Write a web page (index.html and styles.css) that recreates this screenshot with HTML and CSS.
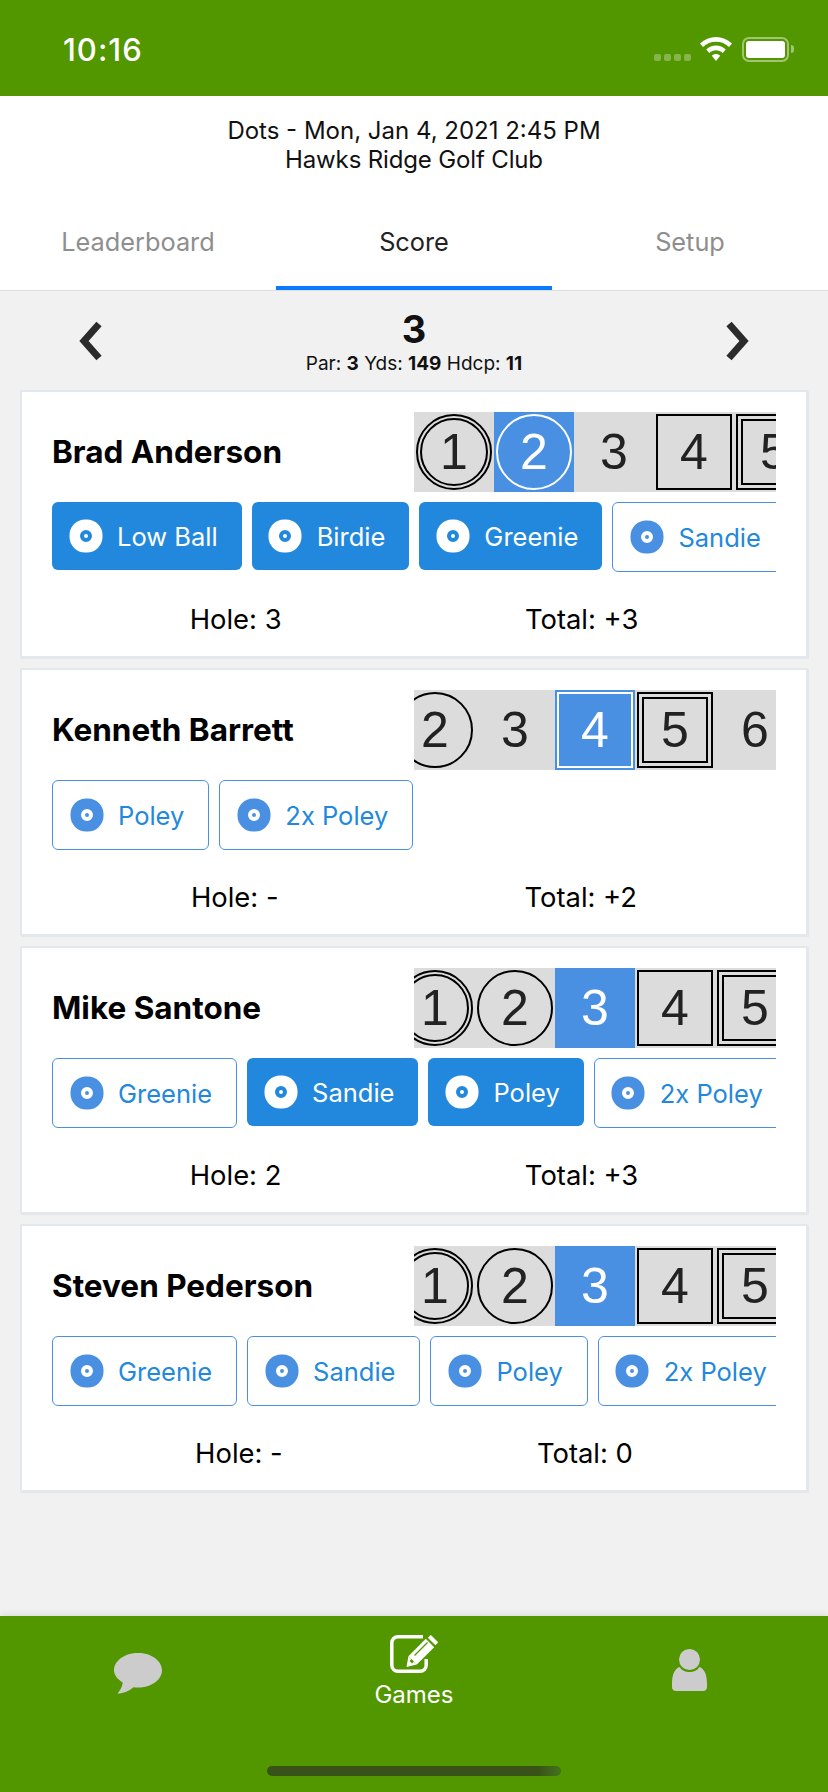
FILE: index.html
```html
<!DOCTYPE html>
<html lang="en">
<head>
    <meta charset="UTF-8">
    <meta name="viewport" content="width=device-width, initial-scale=1.0">
    <title>Score</title>
    <link rel="stylesheet" href="styles.css">
</head>
<body>

<div class="app">
    <!-- Status bar -->
    <div class="status-bar">
        <span class="time">10:16</span>
        <div class="status-icons">
            <div class="signal"><i></i><i></i><i></i><i></i></div>
            <svg class="wifi" width="32" height="24" viewBox="0 0 32 24">
                <path d="M16 0C10 0 4.5 2.3 0 6.5L3 10C6.5 6.7 11 4.8 16 4.8S25.5 6.7 29 10L32 6.5C27.5 2.3 22 0 16 0Z" fill="#fff"/>
                <path d="M16 8.5C12.3 8.5 9 10 6.3 12.5L9.3 16C11.2 14.3 13.5 13.3 16 13.3S20.8 14.3 22.7 16L25.7 12.5C23 10 19.7 8.5 16 8.5Z" fill="#fff"/>
                <path d="M16 17C14.4 17 13 17.6 11.8 18.7L16 24L20.2 18.7C19 17.6 17.6 17 16 17Z" fill="#fff"/>
            </svg>
            <div class="battery"><div class="battery-fill"></div></div>
            <div class="battery-tip"></div>
        </div>
    </div>

    <div class="game-info">
        <div>Dots - Mon, Jan 4, 2021 2:45 PM</div>
        <div class="venue">Hawks Ridge Golf Club</div>
    </div>

    <div class="tabs">
        <div class="tab">Leaderboard</div>
        <div class="tab active">Score</div>
        <div class="tab">Setup</div>
    </div>

    <!-- Hole selector -->
    <div class="hole-nav">
        <svg width="24" height="40" viewBox="0 0 24 40"><path d="M21 3L6 20L21 37" fill="none" stroke="#2b2b2b" stroke-width="7"/></svg>
        <div class="hole-info">
            <div class="hole-num">3</div>
            <div class="hole-meta">Par: <b>3</b> Yds: <b>149</b> Hdcp: <b>11</b></div>
        </div>
        <svg width="24" height="40" viewBox="0 0 24 40"><path d="M3 3L18 20L3 37" fill="none" stroke="#2b2b2b" stroke-width="7"/></svg>
    </div>

    <div class="cards">
        <div class="card">
            <div class="card-top">
                <div class="name">Brad Anderson</div>
                <div class="scores">
                    <div class="cell"><span class="mark double-circle">1</span></div>
                    <div class="cell selected"><span class="mark circle">2</span></div>
                    <div class="cell"><span class="mark">3</span></div>
                    <div class="cell"><span class="mark square">4</span></div>
                    <div class="cell"><span class="mark double-square">5</span></div>
                </div>
            </div>
            <div class="chips">
                <div class="chip on"><span class="dot"></span>Low Ball</div>
                <div class="chip on"><span class="dot"></span>Birdie</div>
                <div class="chip on"><span class="dot"></span>Greenie</div>
                <div class="chip"><span class="dot"></span>Sandie</div>
            </div>
            <div class="totals"><span>Hole: 3</span><span>Total: +3</span></div>
        </div>

        <div class="card">
            <div class="card-top">
                <div class="name">Kenneth Barrett</div>
                <div class="scores scrolled">
                    <div class="cell"><span class="mark circle">2</span></div>
                    <div class="cell"><span class="mark">3</span></div>
                    <div class="cell selected"><span class="mark square">4</span></div>
                    <div class="cell"><span class="mark double-square">5</span></div>
                    <div class="cell"><span class="mark">6</span></div>
                </div>
            </div>
            <div class="chips">
                <div class="chip"><span class="dot"></span>Poley</div>
                <div class="chip"><span class="dot"></span>2x Poley</div>
            </div>
            <div class="totals"><span>Hole: -</span><span>Total: +2</span></div>
        </div>

        <div class="card">
            <div class="card-top">
                <div class="name">Mike Santone</div>
                <div class="scores scrolled">
                    <div class="cell"><span class="mark double-circle">1</span></div>
                    <div class="cell"><span class="mark circle">2</span></div>
                    <div class="cell selected"><span class="mark">3</span></div>
                    <div class="cell"><span class="mark square">4</span></div>
                    <div class="cell"><span class="mark double-square">5</span></div>
                </div>
            </div>
            <div class="chips">
                <div class="chip"><span class="dot"></span>Greenie</div>
                <div class="chip on"><span class="dot"></span>Sandie</div>
                <div class="chip on"><span class="dot"></span>Poley</div>
                <div class="chip"><span class="dot"></span>2x Poley</div>
            </div>
            <div class="totals"><span>Hole: 2</span><span>Total: +3</span></div>
        </div>

        <div class="card">
            <div class="card-top">
                <div class="name">Steven Pederson</div>
                <div class="scores scrolled">
                    <div class="cell"><span class="mark double-circle">1</span></div>
                    <div class="cell"><span class="mark circle">2</span></div>
                    <div class="cell selected"><span class="mark">3</span></div>
                    <div class="cell"><span class="mark square">4</span></div>
                    <div class="cell"><span class="mark double-square">5</span></div>
                </div>
            </div>
            <div class="chips">
                <div class="chip"><span class="dot"></span>Greenie</div>
                <div class="chip"><span class="dot"></span>Sandie</div>
                <div class="chip"><span class="dot"></span>Poley</div>
                <div class="chip"><span class="dot"></span>2x Poley</div>
            </div>
            <div class="totals"><span>Hole: -</span><span>Total: 0</span></div>
        </div>
    </div>

    <!-- Bottom tab bar -->
    <div class="bottom-bar">
        <div class="bottom-item">
            <svg class="chat" width="48" height="41" viewBox="0 0 48 41"><path d="M24 0C37.3 0 48 7.8 48 17.3S37.3 34.6 24 34.6C22.5 34.6 21 34.5 19.5 34.2C15.5 37.5 9.5 40.5 3.5 40.5C6.5 37 8.5 33 8.7 29.5C3.4 26.3 0 22 0 17.3C0 7.8 10.7 0 24 0Z" fill="#ccc"/></svg>
        </div>
        <div class="bottom-item current">
            <svg width="48" height="38" viewBox="0 0 48 38">
                <path d="M33 1.8H8C4.5 1.8 1.8 4.5 1.8 8V30C1.8 33.5 4.5 36.2 8 36.2H30C33.5 36.2 36.2 33.5 36.2 30V24" fill="none" stroke="#fff" stroke-width="3.5"/>
                <path d="M35.8 3.8L44.2 12.2L26.8 29.6L18.4 21.2Z" fill="#fff"/>
                <path d="M18.4 21.2L26.8 29.6L16.5 32Z" fill="#fff"/>
                <path d="M40.8 0.4L47.8 7.4L45.4 9.8L38.4 2.8Z" fill="#fff" stroke="#fff" stroke-linejoin="round"/>
                <path d="M24.5 20.5L37.5 7.5" stroke="#529600" stroke-width="1.2"/>
                <path d="M20.5 25L23 27.5" stroke="#529600" stroke-width="2.5"/>
            </svg>
            <span class="bottom-label">Games</span>
        </div>
        <div class="bottom-item">
            <svg class="person" width="35" height="42" viewBox="0 0 35 42">
                <circle cx="17.5" cy="10.5" r="10.5" fill="#ccc"/>
                <path d="M7.5 18C10 22 14 23 17.5 23S25 22 27.5 18C32 19.5 35 25 35 35V38C35 40.5 33.5 42 31 42H4C1.5 42 0 40.5 0 38V35C0 25 3 19.5 7.5 18Z" fill="#ccc"/>
            </svg>
        </div>
        <div class="home-indicator"></div>
    </div>
</div>

</body>
</html>
```

FILE: styles.css
```css
body {
    margin: 0;
    font-family: Inter, "Noto Sans", sans-serif;
    background-color: #f1f1f1;
}
.app {
    display: flex;
    flex-direction: column;
    height: 1792px;
    overflow: hidden;
}

/* status bar */
.status-bar {
    height: 96px;
    flex-shrink: 0;
    background-color: #529600;
    color: white;
    display: flex;
    justify-content: space-between;
    align-items: flex-start;
    padding: 30px 34px 0 63px;
    box-sizing: border-box;
}
.time {
    font-size: 31px;
    font-weight: 500;
    letter-spacing: 1px;
    line-height: 40px;
}
.status-icons {
    display: flex;
    align-items: flex-start;
    padding-top: 7px;
}
.signal {
    display: flex;
    gap: 3px;
    margin: 17px 9px 0 0;
}
.signal i {
    width: 7px;
    height: 7px;
    border-radius: 2px;
    background: rgba(255, 255, 255, 0.3);
}
.battery {
    width: 47px;
    height: 25px;
    margin-left: 10px;
    padding: 2px;
    box-sizing: border-box;
    border: 2px solid rgba(255, 255, 255, 0.45);
    border-radius: 7px;
}
.battery-fill {
    height: 100%;
    background: white;
    border-radius: 3px;
}
.battery-tip {
    width: 3px;
    height: 8px;
    margin: 8px 0 0 2px;
    background: rgba(255, 255, 255, 0.45);
    border-radius: 0 3px 3px 0;
}

/* header */
.game-info {
    background: white;
    padding-top: 20px;
    height: 82px;
    flex-shrink: 0;
    box-sizing: border-box;
    text-align: center;
    font-size: 24px;
    line-height: 29px;
    color: #111;
}
.venue {
    letter-spacing: -0.15px;
}
.tabs {
    display: grid;
    grid-template-columns: 1fr 1fr 1fr;
    height: 112px;
    flex-shrink: 0;
    background: white;
    border-bottom: 1px solid #ddd;
}
.tab {
    text-align: center;
    font-size: 25.3px;
    line-height: 30px;
    padding-top: 49px;
    color: #8e8e8e;
}
.tab.active {
    color: #222;
    border-bottom: 4px solid #0a7aff;
}

/* hole selector */
.hole-nav {
    display: flex;
    justify-content: space-between;
    align-items: center;
    height: 99px;
    flex-shrink: 0;
    padding: 0 78px;
}
.hole-info {
    text-align: center;
    color: #111;
}
.hole-num {
    font-size: 38px;
    font-weight: 700;
    line-height: 46px;
}
.hole-meta {
    font-size: 19px;
    line-height: 24px;
}

/* player cards */
.cards {
    display: flex;
    flex-direction: column;
    gap: 10px;
    padding: 0 20px;
}
.card {
    height: 268px;
    box-sizing: border-box;
    background: white;
    border: 2px solid #e2e8ee;
    box-shadow: 1px 1px 1px rgba(0, 0, 0, 0.04);
    padding: 20px 30px 0;
}
.card-top {
    display: flex;
    justify-content: space-between;
    align-items: center;
}
.name {
    font-size: 31.5px;
    font-weight: 700;
    padding-bottom: 2px;
    color: #000;
    white-space: nowrap;
}
.scores {
    display: flex;
    width: 362px;
    height: 80px;
    flex-shrink: 0;
    overflow: hidden;
    background: #dcdcdc;
}
.scores.scrolled .cell:first-child {
    margin-left: -19px;
}
.cell {
    width: 80px;
    height: 80px;
    flex-shrink: 0;
    padding: 2px;
    box-sizing: border-box;
    font-family: "Liberation Sans", sans-serif;
    font-size: 50px;
    color: #222;
}
.cell.selected {
    background: #4a90e2;
    color: white;
}
.mark {
    display: flex;
    align-items: center;
    justify-content: center;
    width: 76px;
    height: 76px;
    box-sizing: border-box;
}
.circle {
    border: 2px solid #000;
    border-radius: 50%;
}
.double-circle {
    border: 6px double #000;
    border-radius: 50%;
}
.square {
    border: 2px solid #000;
}
.double-square {
    border: 7px double #000;
}
.selected .mark {
    border-color: white;
}

/* bet chips */
.chips {
    display: flex;
    align-items: flex-start;
    gap: 10px;
    margin-top: 10px;
    width: 724px;
    overflow: hidden;
}
.chip {
    display: flex;
    align-items: center;
    flex-shrink: 0;
    height: 70px;
    box-sizing: border-box;
    padding: 0 24px 0 17px;
    border: 1px solid #4a90e2;
    border-radius: 6px;
    font-size: 25.5px;
    color: #2288dd;
    background: white;
}
.dot {
    display: block;
    width: 12px;
    height: 12px;
    margin: 0 25.5px 0 10.5px;
    box-sizing: border-box;
    border: 4.5px solid #fff;
    border-radius: 50%;
    background: #4a90e2;
    box-shadow: 0 0 0 10.5px #4a90e2;
}
.chip.on {
    height: 68px;
    border: none;
    background: #2288dd;
    color: white;
}
.chip.on .dot {
    border-color: #2288dd;
    background: white;
    box-shadow: 0 0 0 10.5px white;
}

.totals {
    display: flex;
    justify-content: space-around;
    margin: 31px 16px 0;
    font-size: 27.4px;
    line-height: 32px;
    color: #000;
}

/* bottom bar */
.bottom-bar {
    position: relative;
    margin-top: auto;
    height: 176px;
    flex-shrink: 0;
    background: #529600;
    box-shadow: 0 -2px 6px rgba(0, 0, 0, 0.08);
    display: grid;
    grid-template-columns: 1fr 1fr 1fr;
}
.bottom-item {
    display: flex;
    flex-direction: column;
    align-items: center;
    padding-top: 19px;
}
.bottom-label {
    font-size: 24px;
    line-height: 26px;
    margin-top: 9px;
    color: white;
}
.chat {
    margin-top: 18px;
}
.person {
    margin: 14px 2px 0 0;
}
.home-indicator {
    position: absolute;
    left: 267px;
    top: 150px;
    width: 294px;
    height: 10px;
    border-radius: 5px;
    background: linear-gradient(to right, #38521a 92%, #44741a);
}
```
